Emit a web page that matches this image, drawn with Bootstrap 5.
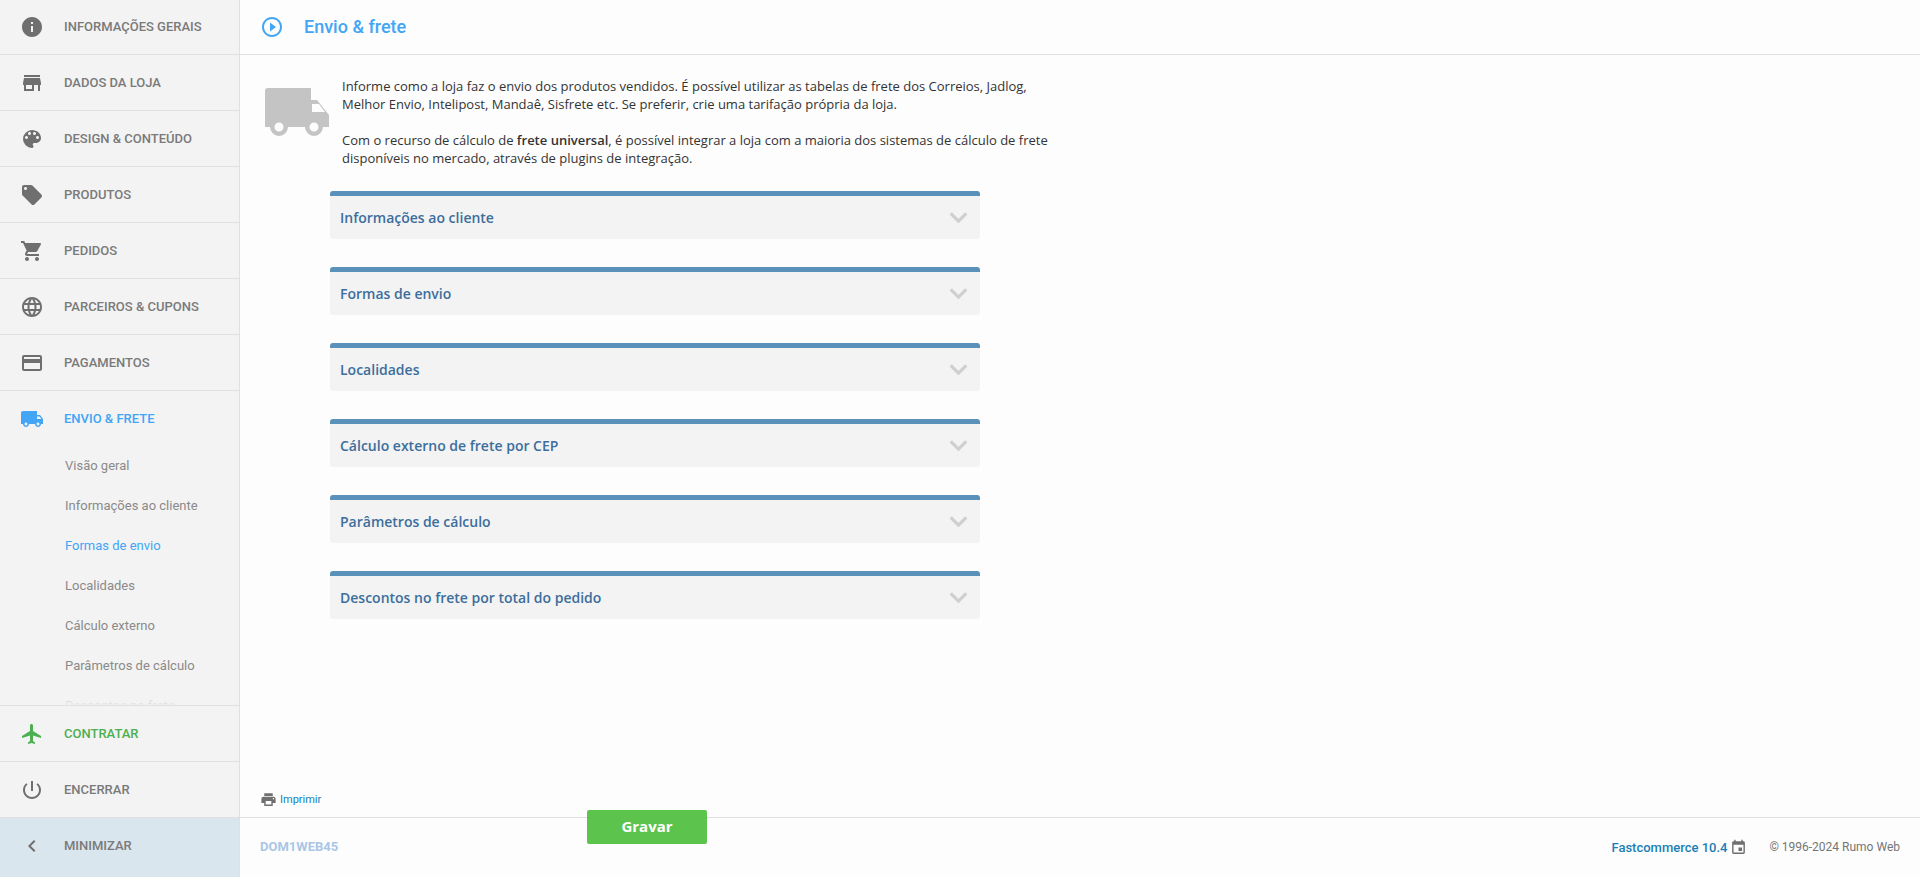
<!doctype html>
<html lang="pt-BR"><head><meta charset="utf-8"><title>Envio & frete</title>
<link href="https://cdn.jsdelivr.net/npm/bootstrap@5.3.0/dist/css/bootstrap.min.css" rel="stylesheet">
<style>
html,body{height:100%;overflow:hidden}
body{background:#fdfdfd;font-family:"Open Sans",sans-serif;font-size:13px;line-height:18px;color:#333}
.app-shell{height:877px}
.side{width:240px;flex:none;background:#f3f3f3;border-right:1px solid #e0e0e0;font-family:Roboto,sans-serif}
.side-scroll{height:706px;margin-top:-1px;overflow:hidden;position:relative;flex:none}
.side-scroll::after{content:"";position:absolute;left:0;right:0;bottom:0;height:30px;background:linear-gradient(rgba(243,243,243,0),rgba(243,243,243,.9))}
.side-item{height:56px;padding-left:20px;gap:20px;border-bottom:1px solid #e0e0e0;font-size:13px;font-weight:500;color:#7a7a7a;text-decoration:none}
.side-item svg{width:24px;height:24px;flex:none;fill:#6f6f6f}
.side-item.open{border-bottom:0;color:#42a5f5}.side-item.open svg{fill:#42a5f5}
.side-item.hire{color:#4caf50}.side-item.hire svg{fill:#4caf50}
.side-item.mini{background:#dae6ee;border-bottom:0;height:59px;padding-bottom:3px}
.side-foot{border-top:1px solid #e0e0e0}
.sub-item{display:flex;align-items:center;height:40px;padding-left:65px;font-size:13px;color:#8a8a8a;text-decoration:none}
.sub-item.on{color:#42a5f5}
.sub-list{margin-top:-1px}
.page-head{height:55px;border-bottom:1px solid #e0e0e0;padding-left:20px;gap:20px;flex:none}
.page-head svg{width:24px;height:24px;fill:#42a5f5;flex:none}
.page-head h1{font:500 18px/1 Roboto,sans-serif;color:#42a5f5;margin:0}
.page-body{min-height:0}
.intro{padding:22px 0 0 25px;gap:13px}
.intro-text{width:745px;color:#333}
.intro-text p{margin:0 0 18px}
.intro-text p:last-child{margin:0}
.intro-text strong{font-weight:600}
.truck-big{width:64px;height:48px;flex:none;margin-top:11px;fill:#c4c4c4}
.panel-stack{margin:24px 0 0 90px;width:650px;gap:28px}
.fold{height:48px;background:#f3f3f3;border-top:5px solid #5a91bb;border-radius:3px;padding:0 12px 0 10px}
.fold span{font-size:14px;font-weight:600;color:#3c6e9c}
.fold svg{width:19px;height:11px;fill:none;stroke:#cfcfcf;stroke-width:3.4}
.print-row{height:31px;padding:0 0 4px 20px;gap:3px;flex:none;margin-top:auto}
.print-row svg{width:17px;height:17px;fill:#6f6f6f}
.print-row a{font:11px Roboto,sans-serif;color:#0f83bd;text-decoration:none}
.page-foot{height:60px;flex:none;border-top:1px solid #e0e0e0;padding:0 20px;font-family:Roboto,sans-serif}
.node-name{font-size:13px;font-weight:700;color:#a9c6e6;width:327px;padding-bottom:1px}
.save-btn{width:120px;height:34px;margin-top:-8px;align-self:flex-start;background:#5cc34c;border:0;border-radius:2px;color:#fff;font:700 15px "Open Sans",sans-serif;padding:0 0 2px}
.save-btn:hover{background:#5cc34c;color:#fff}
.ver{font-size:13px;font-weight:500;color:#1a7fb5;text-decoration:none}
.ver-wrap{gap:3px}
.ver-wrap svg{width:17px;height:17px;fill:#6f6f6f}
.copy{font-size:12px;color:#757575;margin-left:22px;padding-bottom:2px}
</style></head><body>
<div class="app-shell d-flex">
<aside class="side d-flex flex-column">
<div class="side-scroll">
<a class="side-item d-flex align-items-center" href="#"><svg viewBox="0 0 24 24"><path d="M12 2C6.48 2 2 6.48 2 12s4.48 10 10 10 10-4.48 10-10S17.52 2 12 2zm1 15h-2v-6h2v6zm0-8h-2V7h2v2z"/></svg>INFORMAÇÕES GERAIS</a>
<a class="side-item d-flex align-items-center" href="#"><svg viewBox="0 0 24 24"><path d="M20 4H4v2h16V4zm1 10v-2l-1-5H4l-1 5v2h1v6h10v-6h4v6h2v-6h1zm-9 4H6v-4h6v4z"/></svg>DADOS DA LOJA</a>
<a class="side-item d-flex align-items-center" href="#"><svg viewBox="0 0 24 24"><path d="M12 3a9 9 0 0 0 0 18c.83 0 1.5-.67 1.5-1.5 0-.39-.15-.74-.39-1.01-.23-.26-.38-.61-.38-.99 0-.83.67-1.5 1.5-1.5H16c2.76 0 5-2.24 5-5 0-4.42-4.03-8-9-8zm-5.5 9c-.83 0-1.5-.67-1.5-1.5S5.67 9 6.5 9 8 9.67 8 10.5 7.33 12 6.5 12zm3-4C8.67 8 8 7.33 8 6.5S8.67 5 9.5 5s1.5.67 1.5 1.5S10.33 8 9.5 8zm5 0c-.83 0-1.5-.67-1.5-1.5S13.67 5 14.5 5s1.5.67 1.5 1.5S15.33 8 14.5 8zm3 4c-.83 0-1.5-.67-1.5-1.5S16.67 9 17.5 9s1.5.67 1.5 1.5-.67 1.5-1.5 1.5z"/></svg>DESIGN &amp; CONTEÚDO</a>
<a class="side-item d-flex align-items-center" href="#"><svg viewBox="0 0 24 24"><path d="M21.41 11.58l-9-9C12.05 2.22 11.55 2 11 2H4c-1.1 0-2 .9-2 2v7c0 .55.22 1.05.59 1.42l9 9c.36.36.86.58 1.41.58.55 0 1.05-.22 1.41-.59l7-7c.37-.36.59-.86.59-1.41 0-.55-.23-1.06-.59-1.42zM5.5 7C4.67 7 4 6.33 4 5.5S4.67 4 5.5 4 7 4.67 7 5.5 6.33 7 5.5 7z"/></svg>PRODUTOS</a>
<a class="side-item d-flex align-items-center" href="#"><svg viewBox="0 0 24 24"><path d="M7 18c-1.1 0-1.99.9-1.99 2S5.9 22 7 22s2-.9 2-2-.9-2-2-2zM1 2v2h2l3.6 7.59-1.35 2.45c-.16.28-.25.61-.25.96 0 1.1.9 2 2 2h12v-2H7.42c-.14 0-.25-.11-.25-.25l.03-.12.9-1.63h7.45c.75 0 1.41-.41 1.75-1.03l3.58-6.49c.08-.14.12-.31.12-.48 0-.55-.45-1-1-1H5.21l-.94-2H1zm16 16c-1.1 0-1.99.9-1.99 2s.89 2 1.99 2 2-.9 2-2-.9-2-2-2z"/></svg>PEDIDOS</a>
<a class="side-item d-flex align-items-center" href="#"><svg viewBox="0 0 24 24"><path d="M11.99 2C6.47 2 2 6.48 2 12s4.47 10 9.99 10C17.52 22 22 17.52 22 12S17.52 2 11.99 2zm6.93 6h-2.95c-.32-1.25-.78-2.45-1.38-3.56 1.84.63 3.37 1.91 4.33 3.56zM12 4.04c.83 1.2 1.48 2.53 1.91 3.96h-3.82c.43-1.43 1.08-2.76 1.91-3.96zM4.26 14C4.1 13.36 4 12.69 4 12s.1-1.36.26-2h3.38c-.08.66-.14 1.32-.14 2 0 .68.06 1.34.14 2H4.26zm.82 2h2.95c.32 1.25.78 2.45 1.38 3.56-1.84-.63-3.37-1.9-4.33-3.56zm2.95-8H5.08c.96-1.66 2.49-2.93 4.33-3.56C8.81 5.55 8.35 6.75 8.03 8zM12 19.96c-.83-1.2-1.48-2.53-1.91-3.96h3.82c-.43 1.43-1.08 2.76-1.91 3.96zM14.34 14H9.66c-.09-.66-.16-1.32-.16-2 0-.68.07-1.35.16-2h4.68c.09.65.16 1.32.16 2 0 .68-.07 1.34-.16 2zm.25 5.56c.6-1.11 1.06-2.31 1.38-3.56h2.95c-.96 1.65-2.49 2.93-4.33 3.56zM16.36 14c.08-.66.14-1.32.14-2 0-.68-.06-1.34-.14-2h3.38c.16.64.26 1.31.26 2s-.1 1.36-.26 2h-3.38z"/></svg>PARCEIROS &amp; CUPONS</a>
<a class="side-item d-flex align-items-center" href="#"><svg viewBox="0 0 24 24"><path d="M20 4H4c-1.11 0-1.99.89-1.99 2L2 18c0 1.11.89 2 2 2h16c1.11 0 2-.89 2-2V6c0-1.11-.89-2-2-2zm0 14H4v-6h16v6zm0-10H4V6h16v2z"/></svg>PAGAMENTOS</a>
<a class="side-item open d-flex align-items-center" href="#"><svg viewBox="0 0 24 24"><path d="M20 8h-3V4H3c-1.1 0-2 .9-2 2v11h2c0 1.66 1.34 3 3 3s3-1.34 3-3h6c0 1.66 1.34 3 3 3s3-1.34 3-3h2v-5l-3-4zM6 18.5c-.83 0-1.5-.67-1.5-1.5s.67-1.5 1.5-1.5 1.5.67 1.5 1.5-.67 1.5-1.5 1.5zm13.5-9l1.96 2.5H17V9.5h2.5zm-1.5 9c-.83 0-1.5-.67-1.5-1.5s.67-1.5 1.5-1.5 1.5.67 1.5 1.5-.67 1.5-1.5 1.5z"/></svg>ENVIO &amp; FRETE</a>
<div class="sub-list">
<a class="sub-item" href="#">Visão geral</a>
<a class="sub-item" href="#">Informações ao cliente</a>
<a class="sub-item on" href="#">Formas de envio</a>
<a class="sub-item" href="#">Localidades</a>
<a class="sub-item" href="#">Cálculo externo</a>
<a class="sub-item" href="#">Parâmetros de cálculo</a>
<a class="sub-item" href="#">Descontos no frete</a>
</div>
</div>
<div class="side-foot">
<a class="side-item hire d-flex align-items-center" href="#"><svg viewBox="0 0 24 24"><path d="M21 16v-2l-8-5V3.5c0-.83-.67-1.5-1.5-1.5S10 2.67 10 3.5V9l-8 5v2l8-2.5V19l-2 1.5V22l3.5-1 3.5 1v-1.5L13 19v-5.5l8 2.5z"/></svg>CONTRATAR</a>
<a class="side-item d-flex align-items-center" href="#"><svg viewBox="0 0 24 24"><path d="M13 3h-2v10h2V3zm4.83 2.17l-1.42 1.42C17.99 7.86 19 9.81 19 12c0 3.87-3.13 7-7 7s-7-3.13-7-7c0-2.19 1.01-4.14 2.58-5.42L6.17 5.17C4.23 6.82 3 9.26 3 12c0 4.97 4.03 9 9 9s9-4.03 9-9c0-2.74-1.23-5.18-3.17-6.83z"/></svg>ENCERRAR</a>
<a class="side-item mini d-flex align-items-center" href="#"><svg viewBox="0 0 24 24"><path d="M15.41 7.41L14 6l-6 6 6 6 1.41-1.41L10.83 12z"/></svg>MINIMIZAR</a>
</div>
</aside>
<main class="flex-grow-1 d-flex flex-column">
<header class="page-head d-flex align-items-center"><svg viewBox="0 0 24 24"><path d="M10 16.5l6-4.5-6-4.5v9zM12 2C6.48 2 2 6.48 2 12s4.48 10 10 10 10-4.48 10-10S17.52 2 12 2zm0 18c-4.41 0-8-3.59-8-8s3.59-8 8-8 8 3.59 8 8-3.59 8-8 8z"/></svg><h1>Envio &amp; frete</h1></header>
<section class="page-body flex-grow-1 d-flex flex-column">
<div class="intro d-flex">
<svg class="truck-big" viewBox="0 0 64 48"><path fill-rule="evenodd" d="M3 0H46V12H52L64 27V39H58A9 9 0 0 1 40 39H23A9 9 0 0 1 5 39H0V3A3 3 0 0 1 3 0ZM47 16V24H60L54 16ZM14 34.500A4.500 4.500 0 1 0 14 43.500A4.500 4.500 0 1 0 14 34.500ZM49 34.500A4.500 4.500 0 1 0 49 43.500A4.500 4.500 0 1 0 49 34.500Z"/></svg>
<div class="intro-text">
<p>Informe como a loja faz o envio dos produtos vendidos. É possível utilizar as tabelas de frete dos Correios, Jadlog,<br>Melhor Envio, Intelipost, Mandaê, Sisfrete etc. Se preferir, crie uma tarifação própria da loja.</p>
<p>Com o recurso de cálculo de <strong>frete universal</strong>, é possível integrar a loja com a maioria dos sistemas de cálculo de frete<br>disponíveis no mercado, através de plugins de integração.</p>
</div></div>
<div class="panel-stack d-flex flex-column">
<div class="fold d-flex align-items-center justify-content-between"><span>Informações ao cliente</span><svg viewBox="0 0 20 12"><path d="M1.500 1.500L10 10L18.500 1.500"/></svg></div>
<div class="fold d-flex align-items-center justify-content-between"><span>Formas de envio</span><svg viewBox="0 0 20 12"><path d="M1.500 1.500L10 10L18.500 1.500"/></svg></div>
<div class="fold d-flex align-items-center justify-content-between"><span>Localidades</span><svg viewBox="0 0 20 12"><path d="M1.500 1.500L10 10L18.500 1.500"/></svg></div>
<div class="fold d-flex align-items-center justify-content-between"><span>Cálculo externo de frete por CEP</span><svg viewBox="0 0 20 12"><path d="M1.500 1.500L10 10L18.500 1.500"/></svg></div>
<div class="fold d-flex align-items-center justify-content-between"><span>Parâmetros de cálculo</span><svg viewBox="0 0 20 12"><path d="M1.500 1.500L10 10L18.500 1.500"/></svg></div>
<div class="fold d-flex align-items-center justify-content-between"><span>Descontos no frete por total do pedido</span><svg viewBox="0 0 20 12"><path d="M1.500 1.500L10 10L18.500 1.500"/></svg></div>
</div>
<div class="print-row d-flex align-items-center"><svg viewBox="0 0 24 24"><path d="M19 8H5c-1.66 0-3 1.34-3 3v6h4v4h12v-4h4v-6c0-1.66-1.34-3-3-3zm-3 11H8v-5h8v5zm3-7c-.55 0-1-.45-1-1s.45-1 1-1 1 .45 1 1-.45 1-1 1zm-1-9H6v4h12V3z"/></svg><a href="#">Imprimir</a></div>
</section>
<footer class="page-foot d-flex align-items-center">
<span class="node-name">DOM1WEB45</span>
<button class="btn save-btn" type="button">Gravar</button>
<div class="ms-auto d-flex align-items-center">
<div class="ver-wrap d-flex align-items-center"><a class="ver" href="#">Fastcommerce 10.4</a><svg viewBox="0 0 24 24"><path d="M17 12h-5v5h5v-5zM16 1v2H8V1H6v2H5c-1.11 0-1.99.9-1.99 2L3 19c0 1.1.89 2 2 2h14c1.1 0 2-.9 2-2V5c0-1.1-.9-2-2-2h-1V1h-2zm3 18H5V8h14v11z"/></svg></div>
<span class="copy">© 1996-2024 Rumo Web</span>
</div>
</footer>
</main>
</div>
<script src="https://cdn.jsdelivr.net/npm/bootstrap@5.3.0/dist/js/bootstrap.bundle.min.js"></script>
</body></html>
